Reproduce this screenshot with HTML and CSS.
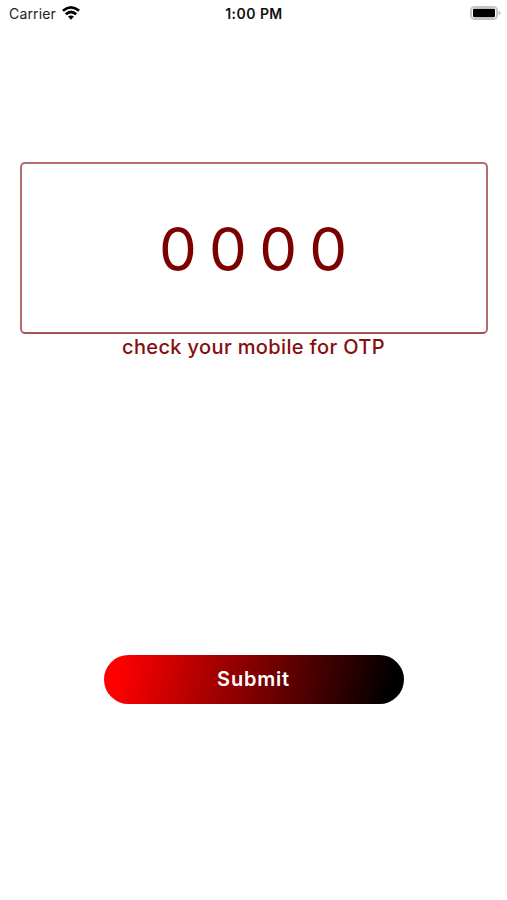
FILE: index.html
```html
<!DOCTYPE html>
<html lang="en">
<head>
  <meta charset="UTF-8">
  <meta name="viewport" content="width=device-width, initial-scale=1.0">
  <title>OTP</title>
  <link rel="stylesheet" href="styles.css">
</head>
<body>
  <div class="screen">
    <div class="status-bar">
      <div class="carrier">
        <span>Carrier</span>
        <svg class="wifi" viewBox="0 0 18 14" width="18" height="14">
          <g fill="none" stroke="#000" stroke-width="2.7">
            <path d="M0.9 4.8 Q9 -1.9 17.1 4.8"/>
            <path d="M3.8 8.3 Q9 3.7 14.2 8.3"/>
          </g>
          <path d="M9 13.7 L6 10.6 Q9 8.4 12 10.6 Z"/>
        </svg>
      </div>
      <div class="time">1:00 PM</div>
      <div class="battery">
        <svg viewBox="0 0 31 14" width="31" height="14">
          <rect x="1" y="1" width="26" height="12" rx="3.6" fill="#fff" stroke="#c4c4c4" stroke-width="2"/>
          <rect x="3" y="2.7" width="22" height="8.6" rx="1.2"/>
          <path d="M28.6 4.8 Q30.6 5.4 30.6 7 Q30.6 8.6 28.6 9.2 Z" fill="#bcbcbc"/>
        </svg>
      </div>
    </div>

    <div class="otp-box">
      <div class="otp">0 0 0 0</div>
    </div>
    <p class="hint">check your mobile for OTP</p>

    <button class="submit-btn">Submit</button>
  </div>
</body>
</html>
```

FILE: styles.css
```css
body {
  margin: 0;
  background: #fff;
  font-family: Inter, "Liberation Sans", sans-serif;
}

.screen {
  height: 900px;
  display: flex;
  flex-direction: column;
  align-items: center;
  overflow: hidden;
}

/* Status bar */
.status-bar {
  width: 100%;
  height: 27px;
  box-sizing: border-box;
  padding: 0 6px 0 9px;
  display: grid;
  grid-template-columns: 1fr auto 1fr;
  align-items: center;
  color: #222;
  font-size: 14px;
}

.carrier {
  display: flex;
  align-items: center;
  gap: 6px;
  letter-spacing: 0.15px;
}

.wifi {
  display: block;
  margin-bottom: 1px;
}

.time {
  font-weight: 600;
  letter-spacing: 0.45px;
  margin-right: 2px;
  color: #111;
}

.battery {
  display: flex;
  justify-content: flex-end;
  padding-bottom: 1px;
}

/* OTP */
.otp-box {
  width: 468px;
  height: 172px;
  margin-top: 135px;
  padding-top: 2px;
  box-sizing: border-box;
  border: 2px solid #b56c6e;
  border-bottom-color: #a85052;
  border-radius: 5px;
  display: flex;
  align-items: center;
  justify-content: center;
}

.otp {
  font-size: 60px;
  line-height: 72px;
  color: #7d0000;
  white-space: nowrap;
  word-spacing: -4.6px;
  margin-right: 1px;
}

.hint {
  margin: 0;
  font-size: 20px;
  line-height: 26px;
  font-weight: 500;
  letter-spacing: 0.36px;
  color: #850f10;
  white-space: nowrap;
}

.submit-btn {
  width: 300px;
  height: 49px;
  margin-top: 294.5px;
  padding: 0;
  border: none;
  border-radius: 25px;
  background: linear-gradient(100deg, #ff0000 5%, #000 95%);
  color: #fff;
  font-family: inherit;
  font-size: 20px;
  font-weight: 600;
  letter-spacing: 0.8px;
  cursor: pointer;
}
```
